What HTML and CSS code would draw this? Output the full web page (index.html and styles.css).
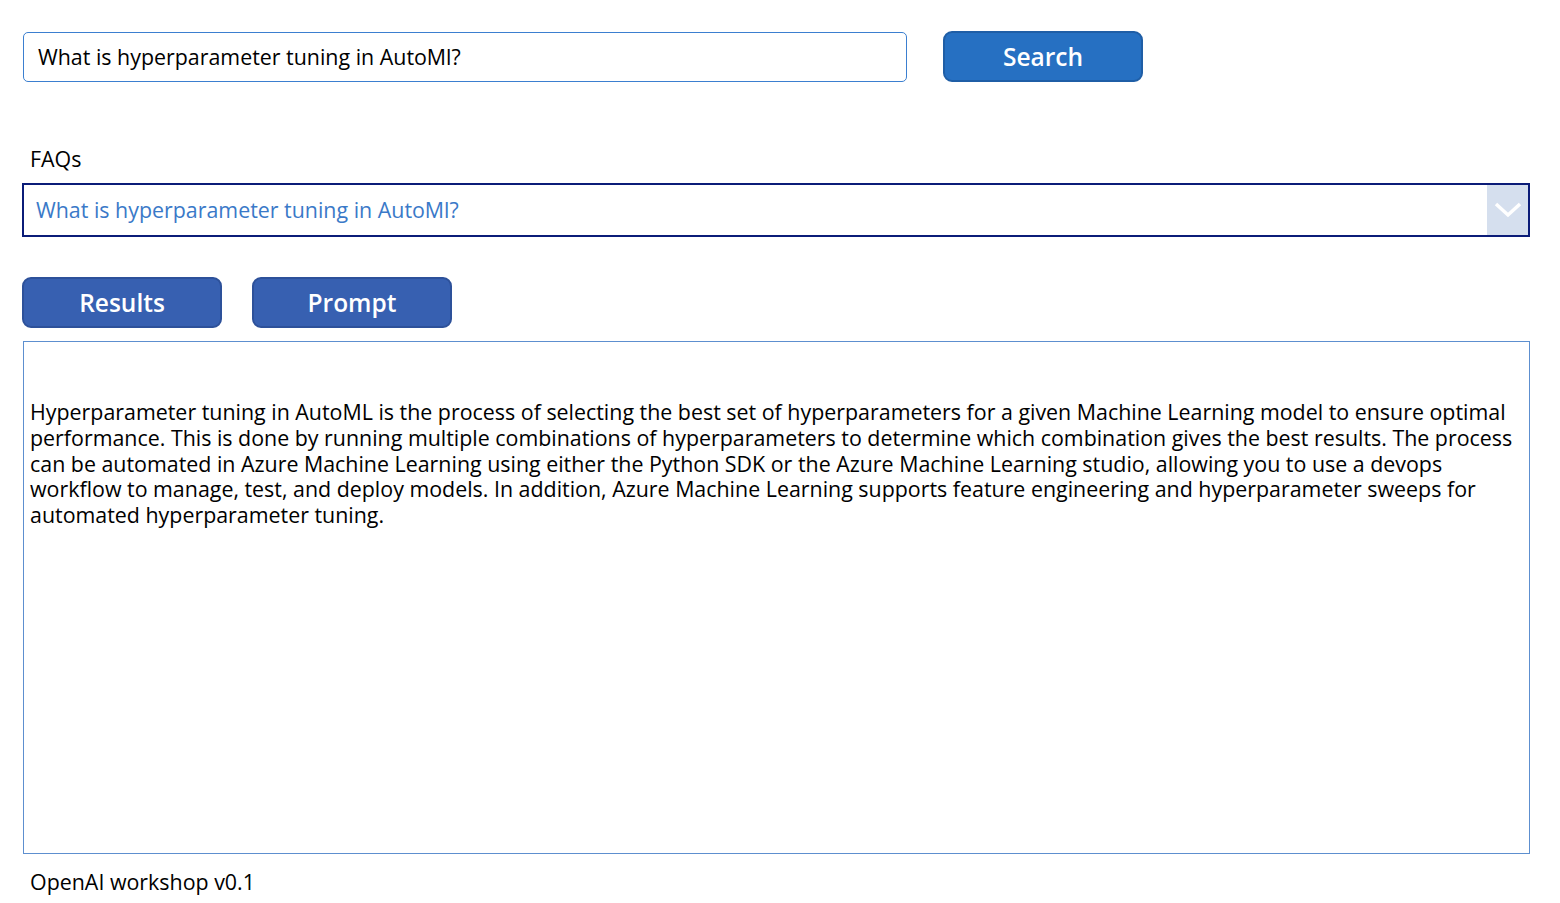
FILE: index.html
```html
<!DOCTYPE html>
<html>
<head>
<meta charset="utf-8">
<link rel="stylesheet" href="styles.css">
</head>
<body>
<div class="page">
  <div class="search-row">
    <div class="search-input">What is hyperparameter tuning in AutoMl?</div>
    <button class="btn btn-search">Search</button>
  </div>
  <div class="faq-label">FAQs</div>
  <div class="dropdown">
    <div class="dropdown-value">What is hyperparameter tuning in AutoMl?</div>
    <div class="dropdown-chevron">
      <svg width="28" height="18" viewBox="0 0 28 18"><path d="M2 3 L14 14 L26 3" fill="none" stroke="#ffffff" stroke-width="3.5"/></svg>
    </div>
  </div>
  <div class="tab-row">
    <button class="btn btn-tab">Results</button>
    <button class="btn btn-tab">Prompt</button>
  </div>
  <div class="result-box">
    <p class="result-text">Hyperparameter tuning in AutoML is the process of selecting the best set of hyperparameters for a given Machine Learning model to ensure optimal performance. This is done by running multiple combinations of hyperparameters to determine which combination gives the best results. The process can be automated in Azure Machine Learning using either the Python SDK or the Azure Machine Learning studio, allowing you to use a devops workflow to manage, test, and deploy models. In addition, Azure Machine Learning supports feature engineering and hyperparameter sweeps for automated hyperparameter tuning.</p>
  </div>
  <div class="footer">OpenAI workshop v0.1</div>
</div>
</body>
</html>
```

FILE: styles.css
```css
html, body {
  margin: 0;
  padding: 0;
  background: #ffffff;
}
body {
  font-family: "Open Sans", "Noto Sans", sans-serif;
  color: #000000;
}
.page {
  width: 1560px;
  height: 903px;
  position: relative;
  box-sizing: border-box;
  padding: 31px 0 0 22px;
}
.search-row {
  display: flex;
  align-items: flex-start;
  gap: 36px;
}
.search-input {
  box-sizing: border-box;
  width: 884px;
  height: 50px;
  margin-left: 1px;
  margin-top: 1px;
  border: 1px solid #3b7fd0;
  border-radius: 5px;
  padding-left: 14px;
  font-size: 21.4px;
  line-height: 48px;
  color: #000;
}
.btn {
  font-family: "Open Sans", "Noto Sans", sans-serif;
  font-weight: 600;
  font-size: 24.5px;
  color: #ffffff;
  box-sizing: border-box;
  width: 200px;
  height: 51px;
  border-radius: 9px;
  padding: 0;
  cursor: pointer;
}
.btn-search {
  background: #2670c2;
  border: 2px solid #1f5ea6;
}
.faq-label {
  margin-top: 63px;
  margin-left: 8px;
  font-size: 21.4px;
  line-height: 28px;
  height: 28px;
}
.dropdown {
  margin-top: 10px;
  box-sizing: border-box;
  width: 1508px;
  height: 54px;
  border: 2px solid #0b1c78;
  display: flex;
}
.dropdown-value {
  flex: 1;
  padding-left: 12px;
  font-size: 21.4px;
  line-height: 50px;
  color: #3a79c8;
}
.dropdown-chevron {
  width: 41px;
  background: #d5dfee;
  display: flex;
  align-items: center;
  justify-content: center;
}
.tab-row {
  margin-top: 40px;
  display: flex;
  gap: 30px;
}
.btn-tab {
  background: #3760b1;
  border: 2px solid #2d519a;
}
.result-box {
  margin-top: 13px;
  margin-left: 1px;
  box-sizing: border-box;
  width: 1507px;
  height: 513px;
  border: 1px solid #5d8fcf;
  padding: 57px 6px 0 6px;
}
.result-text {
  margin: 0;
  font-size: 21.4px;
  line-height: 25.8px;
  color: #000;
}
.footer {
  margin-top: 14px;
  margin-left: 8px;
  font-size: 21.4px;
  line-height: 28px;
}
```
